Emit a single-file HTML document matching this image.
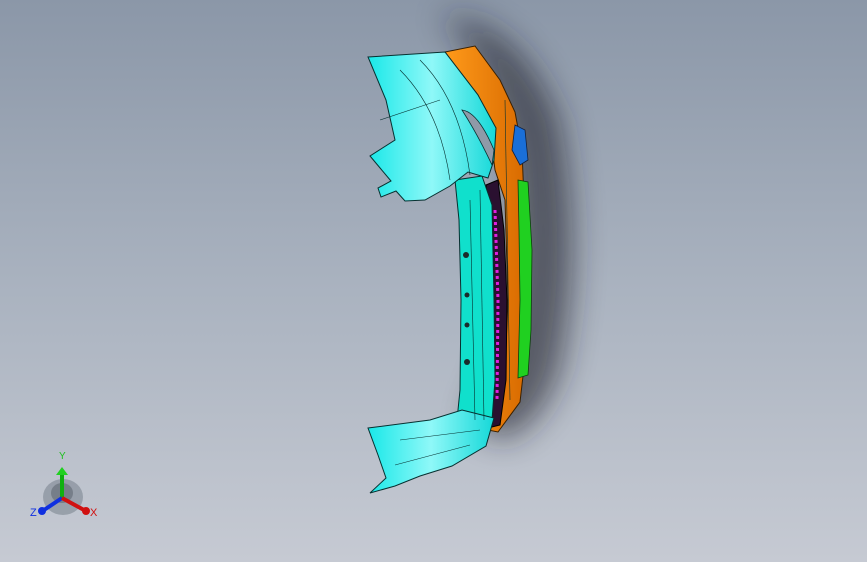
<!DOCTYPE html>
<html><head><style>
html,body{margin:0;padding:0}
body{width:867px;height:562px;overflow:hidden;background:linear-gradient(180deg,#8b97a8 0%,#a9b2bf 50%,#c6cad3 100%);font-family:"Liberation Sans",sans-serif}
svg{position:absolute;left:0;top:0}
</style></head><body>
<svg width="867" height="562" viewBox="0 0 867 562">
<defs>
<filter id="bl" x="-50%" y="-50%" width="200%" height="200%"><feGaussianBlur stdDeviation="16"/></filter>
<linearGradient id="cy" x1="0" y1="0" x2="1" y2="0"><stop offset="0" stop-color="#19e8e8"/><stop offset="0.5" stop-color="#8ff8f8"/><stop offset="1" stop-color="#15d8d8"/></linearGradient>
<linearGradient id="or" x1="0" y1="0" x2="1" y2="0"><stop offset="0" stop-color="#ff9a1a"/><stop offset="1" stop-color="#d86a00"/></linearGradient>
</defs>
<path d="M440 15 Q520 20 560 120 Q585 250 560 370 Q540 430 500 440 L470 420 Q530 300 510 150 Q490 60 440 15Z" fill="#1a1f28" opacity="0.6" filter="url(#bl)"/>
<path d="M445 52 L475 46 L500 80 L515 112 L522 150 L526 250 L526 350 L520 402 L498 432 L488 430 L504 390 L508 300 L505 200 L495 170 L490 130 L478 95Z" fill="url(#or)" stroke="#3a2000" stroke-width="1"/>
<path d="M515 125 L525 130 L528 160 L520 165 L512 150Z" fill="#1a6fd8" stroke="#102040" stroke-width="0.8"/>
<path d="M518 180 L528 182 L532 250 L531 330 L528 375 L518 378 L520 300 L519 230Z" fill="#20d020" stroke="#0a400a" stroke-width="0.8"/>
<path d="M486 185 L498 180 L504 230 L507 300 L506 380 L500 425 L488 428 L492 380 L494 300 L492 230Z" fill="#2a1030" stroke="#000" stroke-width="1"/>
<path d="M495 210 L498 300 L497 400" stroke="#e020e0" stroke-width="3" stroke-dasharray="3 3" fill="none"/>
<path d="M455 180 L482 176 L492 205 L494 300 L495 380 L492 420 L478 442 L455 440 L460 390 L461 300 L459 220Z" fill="#10e0cc" stroke="#063030" stroke-width="1"/>
<path d="M368 57 L445 52 L478 95 L496 128 L494 160 L488 178 L468 172 L450 186 L425 200 L405 201 L396 191 L381 197 L378 188 L391 181 L370 156 L395 140 L386 100Z" fill="url(#cy)" stroke="#063030" stroke-width="1"/>
<path d="M462 110 Q478 112 494 150 L492 165 Q478 135 462 110Z" fill="#8f9aa8" stroke="#063030" stroke-width="0.8"/>
<path d="M368 428 L430 420 L462 410 L494 418 L486 446 L452 466 L420 476 L395 486 L370 493 L386 478 L378 455Z" fill="url(#cy)" stroke="#063030" stroke-width="1"/>
<g stroke="#063030" stroke-width="0.6" fill="none">
<path d="M400 70 Q440 110 450 180"/><path d="M420 60 Q460 100 470 175"/><path d="M380 120 L440 100"/>
<path d="M470 200 L475 420"/><path d="M480 190 L484 420"/><path d="M400 440 L480 430"/><path d="M395 465 L470 445"/>
<path d="M505 100 L510 400"/>
</g>
<g fill="#1a2a2a"><circle cx="466" cy="255" r="3"/><circle cx="467" cy="295" r="2.5"/><circle cx="467" cy="325" r="2.5"/><circle cx="467" cy="362" r="3"/></g>
<ellipse cx="63" cy="497" rx="20" ry="18" fill="#707a85" opacity="0.5"/>
<ellipse cx="62" cy="493" rx="11" ry="10" fill="#555e68" opacity="0.5"/>
<line x1="62" y1="498" x2="62" y2="473" stroke="#10b010" stroke-width="4"/>
<path d="M56 475 L62 467 L68 475Z" fill="#20d020"/>
<line x1="62" y1="498" x2="44" y2="510" stroke="#1030e0" stroke-width="4"/>
<circle cx="42" cy="511" r="4" fill="#1030e0"/>
<line x1="62" y1="498" x2="84" y2="510" stroke="#d01010" stroke-width="4"/>
<circle cx="86" cy="511" r="4" fill="#d01010"/>
<text x="59" y="459" font-size="10" fill="#20c020" font-family="Liberation Sans">Y</text>
<text x="30" y="516" font-size="11" fill="#1030e0" font-family="Liberation Sans">Z</text>
<text x="90" y="516" font-size="11" fill="#d01010" font-family="Liberation Sans">X</text>
</svg>
</body></html>
